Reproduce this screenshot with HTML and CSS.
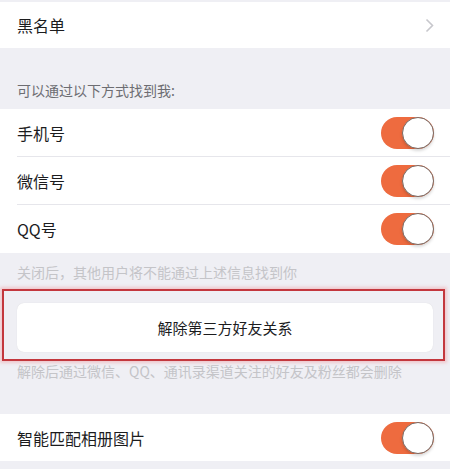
FILE: index.html
```html
<!DOCTYPE html>
<html>
<head>
  <meta name="viewport" content="width=device-width, initial-scale=1">
  <link rel="stylesheet" href="styles.css">
</head>
<body>

  <div class="group group-top">
    <div class="row">
      <span class="label">黑名单</span>
      <svg class="chevron" width="9" height="15" viewBox="0 0 9 15">
        <path d="M1.5 1.5 L7.5 7.5 L1.5 13.5" fill="none" stroke="#c7c7cc" stroke-width="1.6"/>
      </svg>
    </div>
  </div>

  <div class="section-head">可以通过以下方式找到我:</div>

  <div class="group">
    <div class="row">
      <span class="label">手机号</span>
      <div class="switch"><div class="knob"></div></div>
    </div>
    <div class="row">
      <span class="label">微信号</span>
      <div class="switch"><div class="knob"></div></div>
    </div>
    <div class="row">
      <span class="label">QQ号</span>
      <div class="switch"><div class="knob"></div></div>
    </div>
  </div>

  <div class="section-foot">关闭后，其他用户将不能通过上述信息找到你</div>

  <!-- red highlight box around the button -->
  <div class="highlight">
    <div class="button">解除第三方好友关系</div>
  </div>

  <div class="section-foot foot-tight">解除后通过微信、QQ、通讯录渠道关注的好友及粉丝都会删除</div>

  <div class="group group-last">
    <div class="row">
      <span class="label">智能匹配相册图片</span>
      <div class="switch"><div class="knob"></div></div>
    </div>
  </div>

</body>
</html>
```

FILE: styles.css
```css
/* Base styling */
body {
  margin: 0;
  padding: 0;
  background: #efeff4;
  font-family: "Noto Sans CJK SC", "Noto Sans", sans-serif;
  color: #1c1c1e;
}
/* White list groups */
.group {
  background: #fff;
}
.group-top {
  margin-top: 2px;
}
.group-last {
  margin-top: 41px;
}
.row {
  height: 48px;
  display: flex;
  align-items: center;
  justify-content: space-between;
  margin-left: 17px;
  padding-right: 16px;
  box-sizing: border-box;
  border-bottom: 1px solid #e6e6eb;
}
.row:last-child {
  border-bottom: none;
}
.group-top .row {
  height: 46px;
}
.group-last .row {
  height: 47px;
}
.label {
  font-size: 16px;
  line-height: 20px;
}
.chevron {
  margin-right: 0;
}
/* iOS style switch */
.switch {
  width: 53px;
  height: 32px;
  border-radius: 16px;
  background: #ee6b3f;
  display: flex;
  justify-content: flex-end;
  align-items: center;
}
.knob {
  width: 30px;
  height: 30px;
  border-radius: 50%;
  background: #fff;
  border: 1px solid #7a6a64;
  box-shadow: 0 2px 3px rgba(0,0,0,0.15);
}
/* Section texts */
.section-head {
  height: 61px;
  box-sizing: border-box;
  padding: 32px 17px 0;
  font-size: 14px;
  line-height: 20px;
  color: #6d6d72;
}
.section-foot {
  height: 36px;
  box-sizing: border-box;
  padding: 9px 17px 0;
  font-size: 14px;
  line-height: 20px;
  color: #c4c4c8;
}
.foot-tight {
  height: 12px;
  padding-top: 0;
  overflow: visible;
}
/* Highlight box with button */
.highlight {
  margin: 0 5px 0 2px;
  border: 2px solid #c3373d;
  box-shadow: 0 0 3px 2px rgba(240,150,155,0.45);
  padding: 12px 10px 7px 13px;
}
.button {
  height: 49px;
  background: #fff;
  border-radius: 7px;
  display: flex;
  align-items: center;
  justify-content: center;
  font-size: 15px;
  color: #1c1c1e;
  box-shadow: 0 0 1px rgba(0,0,0,0.12);
}
```
